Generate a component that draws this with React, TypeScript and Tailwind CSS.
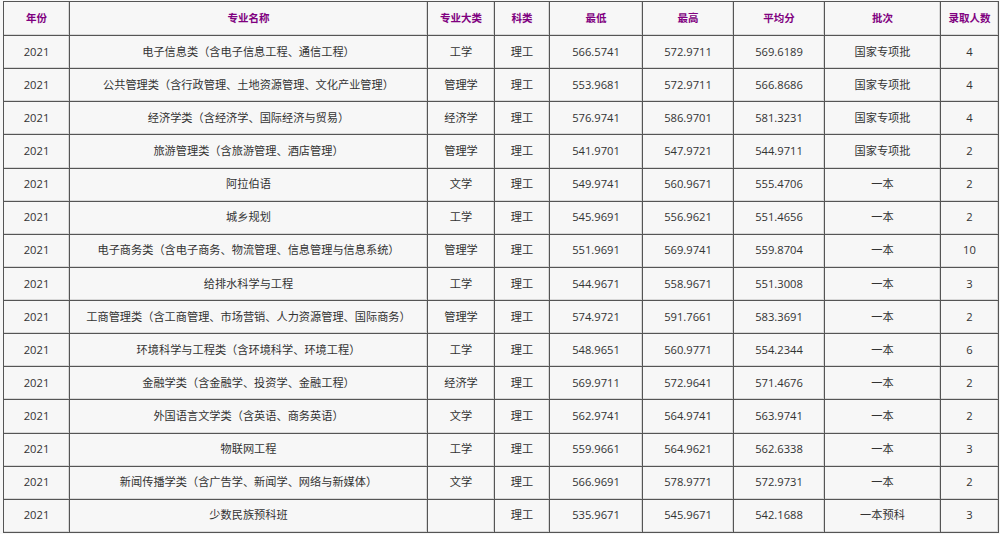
import React from "react";

const rows: [string, string, string, string, string, string, string, string, string][] = [
  ["2021", "电子信息类（含电子信息工程、通信工程）", "工学", "理工", "566.5741", "572.9711", "569.6189", "国家专项批", "4"],
  ["2021", "公共管理类（含行政管理、土地资源管理、文化产业管理）", "管理学", "理工", "553.9681", "572.9711", "566.8686", "国家专项批", "4"],
  ["2021", "经济学类（含经济学、国际经济与贸易）", "经济学", "理工", "576.9741", "586.9701", "581.3231", "国家专项批", "4"],
  ["2021", "旅游管理类（含旅游管理、酒店管理）", "管理学", "理工", "541.9701", "547.9721", "544.9711", "国家专项批", "2"],
  ["2021", "阿拉伯语", "文学", "理工", "549.9741", "560.9671", "555.4706", "一本", "2"],
  ["2021", "城乡规划", "工学", "理工", "545.9691", "556.9621", "551.4656", "一本", "2"],
  ["2021", "电子商务类（含电子商务、物流管理、信息管理与信息系统）", "管理学", "理工", "551.9691", "569.9741", "559.8704", "一本", "10"],
  ["2021", "给排水科学与工程", "工学", "理工", "544.9671", "558.9671", "551.3008", "一本", "3"],
  ["2021", "工商管理类（含工商管理、市场营销、人力资源管理、国际商务）", "管理学", "理工", "574.9721", "591.7661", "583.3691", "一本", "2"],
  ["2021", "环境科学与工程类（含环境科学、环境工程）", "工学", "理工", "548.9651", "560.9771", "554.2344", "一本", "6"],
  ["2021", "金融学类（含金融学、投资学、金融工程）", "经济学", "理工", "569.9711", "572.9641", "571.4676", "一本", "2"],
  ["2021", "外国语言文学类（含英语、商务英语）", "文学", "理工", "562.9741", "564.9741", "563.9741", "一本", "2"],
  ["2021", "物联网工程", "工学", "理工", "559.9661", "564.9621", "562.6338", "一本", "3"],
  ["2021", "新闻传播学类（含广告学、新闻学、网络与新媒体）", "文学", "理工", "566.9691", "578.9771", "572.9731", "一本", "2"],
  ["2021", "少数民族预科班", "", "理工", "535.9671", "545.9671", "542.1688", "一本预科", "3"],
];

const headers = ["年份", "专业名称", "专业大类", "科类", "最低", "最高", "平均分", "批次", "录取人数"];
const widths = [66, 358, 67, 55, 93, 91, 91, 116, 58];

export default function App() {
  return (
    <div
      className="w-[1000px] h-[534px] bg-[#f7f7f7] overflow-hidden pl-[3px] pt-[1px]"
      style={{ fontFamily: '"Open Sans", "Noto Sans CJK SC", sans-serif' }}
    >
      <table className="table-fixed border-collapse w-[996px] bg-[#f7f7f7]">
        <colgroup>
          {widths.map((w, i) => (
            <col key={i} style={{ width: w }} />
          ))}
        </colgroup>
        <thead>
          <tr className="h-[34px]">
            {headers.map((h) => (
              <th
                key={h}
                className="border border-[#555] text-center text-[10.5px] font-bold text-[#800080] p-0 shadow-[inset_-1px_-1px_0_#d8d8d8]"
              >
                {h}
              </th>
            ))}
          </tr>
        </thead>
        <tbody>
          {rows.map((r, i) => (
            <tr key={i} className="h-[33.13px]">
              {r.map((c, j) => (
                <td
                  key={j}
                  className="border border-[#555] text-center text-[11.2px] text-[#333] p-0 whitespace-nowrap shadow-[inset_-1px_-1px_0_#d8d8d8]"
                >
                  {c}
                </td>
              ))}
            </tr>
          ))}
        </tbody>
      </table>
    </div>
  );
}
